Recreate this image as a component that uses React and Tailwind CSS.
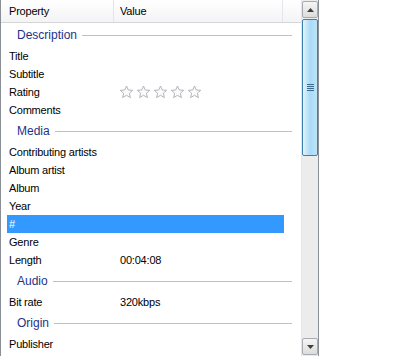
import React from "react";

const font = { fontFamily: '"Liberation Sans", Arial, sans-serif' };

function Star() {
  return (
    <svg width="15" height="14" viewBox="0 0 15 14" className="mr-[2px]">
      <path
        d="M7.5 1 L9.3 5 L13.7 5.3 L10.4 8.2 L11.4 12.6 L7.5 10.3 L3.6 12.6 L4.6 8.2 L1.3 5.3 L5.7 5 Z"
        fill="#fbfbfb"
        stroke="#a9adb3"
        strokeWidth="0.9"
        strokeLinejoin="round"
      />
    </svg>
  );
}

function Group({ label }) {
  return (
    <div className="h-[24px] flex items-center pl-[16px] pr-[9px]">
      <span className="text-[12px] text-[#1e3287] leading-none">{label}</span>
      <div className="flex-1 h-px bg-[#b9c1c9] ml-[5px]" />
    </div>
  );
}

function Row({ label, value, selected }) {
  return (
    <div
      className={
        "h-[18px] flex items-center text-[11px] tracking-[-0.2px] leading-none mx-[6px] w-[277px] " +
        (selected ? "bg-[#3399ff] text-white" : "text-black")
      }
    >
      <div className="w-[113px] pl-[2px]">{label}</div>
      <div className="flex-1 flex items-center">{value}</div>
    </div>
  );
}

export default function App() {
  return (
    <div className="w-[398px] h-[356px] bg-white flex" style={font}>
      <div className="w-[319px] h-[356px] border-l border-r border-[#8a8f96] flex">
        <div className="flex-1 flex flex-col overflow-hidden">
          <div className="h-[23px] flex border-b border-[#d5d5d5] bg-gradient-to-b from-white to-[#f3f4f6] text-[11px] tracking-[-0.2px] text-black">
            <div className="w-[113px] pl-[8px] flex items-center border-r border-[#e3e5e8]">Property</div>
            <div className="w-[169px] pl-[6px] flex items-center border-r border-[#e3e5e8]">Value</div>
            <div className="flex-1" />
          </div>
          <Group label="Description" />
          <Row label="Title" />
          <Row label="Subtitle" />
          <Row
            label="Rating"
            value={
              <div className="flex items-center -ml-[1px]">
                <Star />
                <Star />
                <Star />
                <Star />
                <Star />
              </div>
            }
          />
          <Row label="Comments" />
          <Group label="Media" />
          <Row label="Contributing artists" />
          <Row label="Album artist" />
          <Row label="Album" />
          <Row label="Year" />
          <Row label="#" selected />
          <Row label="Genre" />
          <Row label="Length" value="00:04:08" />
          <Group label="Audio" />
          <Row label="Bit rate" value="320kbps" />
          <Group label="Origin" />
          <Row label="Publisher" />
        </div>
        <div className="w-[17px] h-full bg-[#ececec] flex flex-col py-[1px] border-l border-[#e6e6e6]">
          <div className="h-[17px] border border-[#a8acb1] rounded-[2px] bg-gradient-to-b from-[#f5f5f5] to-[#dcdcdc] flex items-center justify-center">
            <svg width="7" height="4" viewBox="0 0 7 4">
              <path d="M0 4 L3.5 0 L7 4 Z" fill="#404040" />
            </svg>
          </div>
          <div className="h-[137px] mt-[1px] border border-[#3c7fb1] rounded-[2px] bg-gradient-to-r from-[#e3f4fc] via-[#a9dbf6] to-[#bde4f8] flex items-center justify-center">
            <div className="flex flex-col gap-[1px]">
              <div className="w-[7px] h-px bg-[#3a6a8c]" />
              <div className="w-[7px] h-px bg-[#3a6a8c]" />
              <div className="w-[7px] h-px bg-[#3a6a8c]" />
              <div className="w-[7px] h-px bg-[#3a6a8c]" />
            </div>
          </div>
          <div className="flex-1" />
          <div className="h-[17px] border border-[#a8acb1] rounded-[2px] bg-gradient-to-b from-[#f5f5f5] to-[#dcdcdc] flex items-center justify-center">
            <svg width="7" height="4" viewBox="0 0 7 4">
              <path d="M0 0 L7 0 L3.5 4 Z" fill="#404040" />
            </svg>
          </div>
        </div>
      </div>
    </div>
  );
}
